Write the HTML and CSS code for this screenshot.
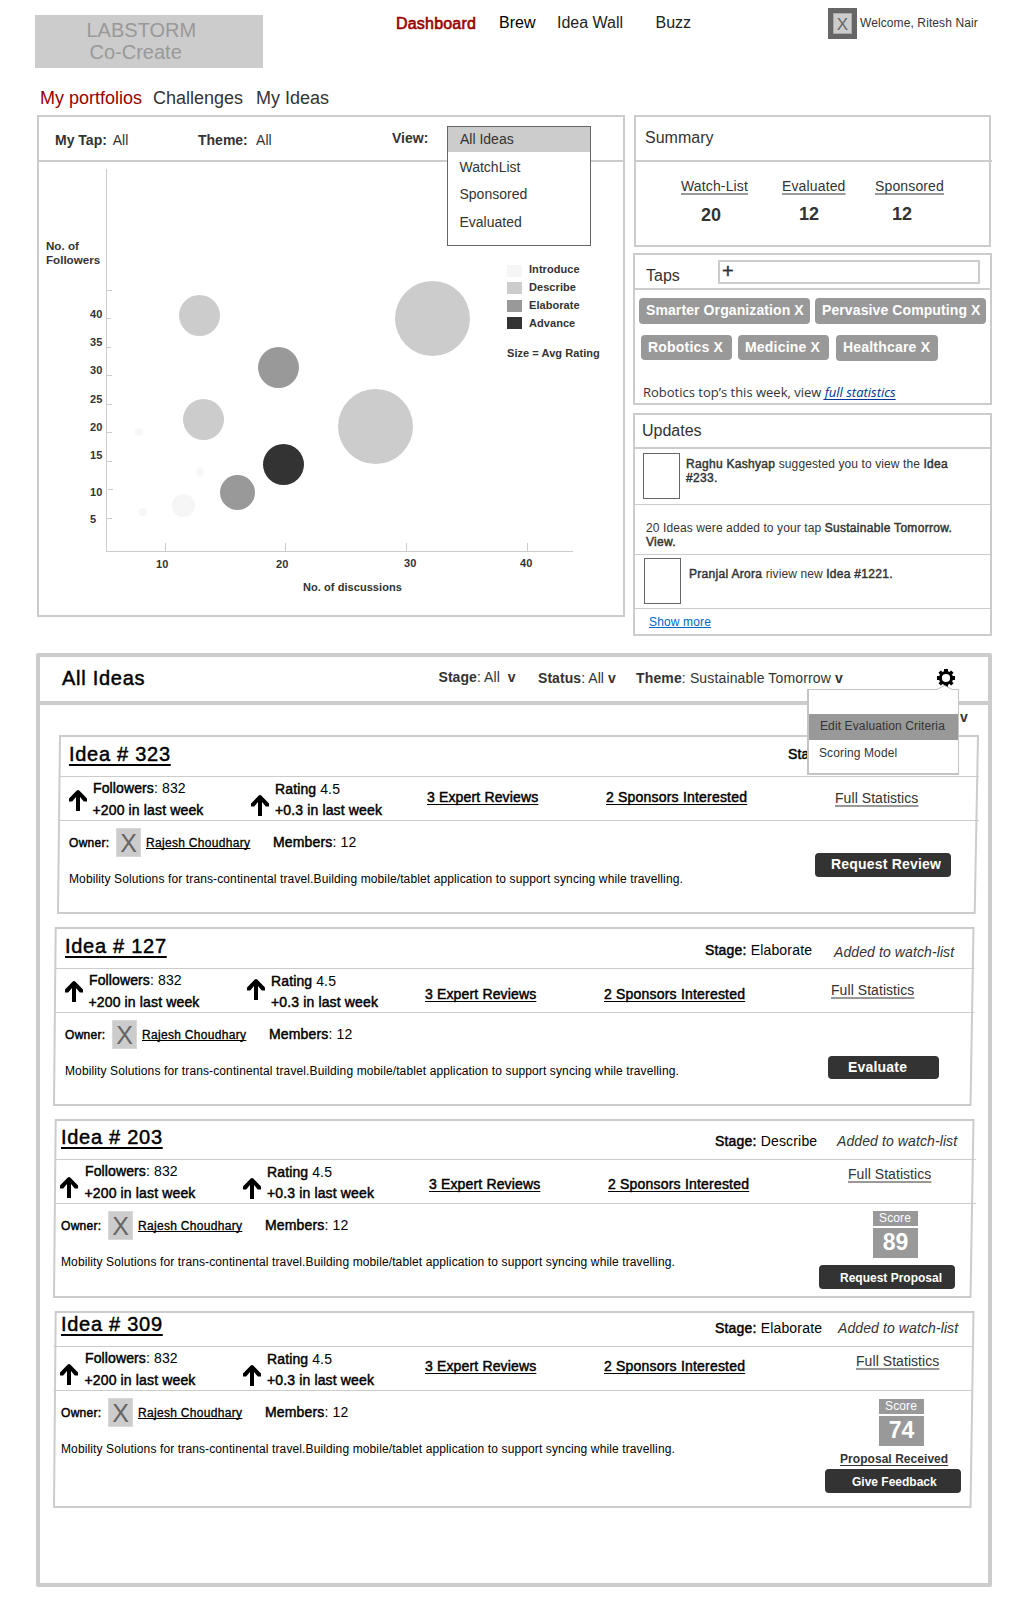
FILE: index.html
```html
<!DOCTYPE html>
<html lang="en">
<head>
<meta charset="utf-8">
<title>Labstorm Co-Create</title>
<link rel="stylesheet" href="styles.css">
</head>
<body>
<svg width="0" height="0" class="defs">
  <symbol id="arrow" viewBox="0 0 18 21"><path d="M7 21V7L3.200 11.500H0V8.600L7.500.8Q9-.6 10.500.8L18 8.600V11.500H14.800L11 7V21z"/></symbol>
</svg>

<header class="top">
  <div class="logo">LABSTORM<br><span>Co-Create</span></div>
  <nav class="nav">
    <a class="active">Dashboard</a><a class="dark">Brew</a><a>Idea Wall</a><a>Buzz</a>
  </nav>
  <div class="user"><span class="user-pic"><span>X</span></span><span class="user-name">Welcome, Ritesh Nair</span></div>
</header>

<nav class="subnav"><a class="active">My portfolios</a><a>Challenges</a><a>My Ideas</a></nav>

<main class="overview">
  <section class="panel portfolio">
    <div class="filters">
      <span><b>My Tap:</b> <span class="value">All</span></span>
      <span><b>Theme:</b>&nbsp; <span class="value narrow">All</span></span>
      <div class="view"><b>View:</b>
        <ul class="dropdown"><li class="on">All Ideas</li><li>WatchList</li><li>Sponsored</li><li>Evaluated</li></ul>
      </div>
    </div>
    <svg class="chart" width="584" height="453" viewBox="39 162 584 453">
      <g fill="#ccc" shape-rendering="crispEdges">
        <path d="M106 169h1v383h-1zM106 551h467v1H106z"/>
        <path d="M107 290h5v1h-5zM107 318h4v1h-4zM107 347h4v1h-4zM107 375h5v1h-5zM107 404h5v1h-5zM107 432h5v1h-5zM107 461h5v1h-5zM108 489h5v1h-5zM107 518h5v1h-5z"/>
        <path d="M165 543h1v8h-1zM285 543h1v8h-1zM406 543h1v8h-1zM527 543h1v8h-1z"/>
      </g>
      <g fill="#ccc"><circle cx="199.500" cy="315.500" r="20.500"/><circle cx="203.500" cy="419.500" r="20.500"/><circle cx="432.500" cy="318.500" r="37.500"/><circle cx="375.500" cy="426.500" r="37.500"/></g>
      <g fill="#999"><circle cx="278.500" cy="367.500" r="20.500"/><circle cx="237.500" cy="492.500" r="17.500"/></g>
      <circle cx="283.500" cy="464.500" r="20.500" fill="#333"/>
      <g fill="#f6f6f6"><circle cx="139" cy="432" r="4"/><circle cx="200" cy="472" r="4"/><circle cx="143" cy="512" r="4"/><circle cx="183.500" cy="505.500" r="11.500"/></g>
      <g class="axis-title"><text x="46" y="250">No. of</text><text x="46" y="264">Followers</text></g>
      <g class="labels">
        <text x="90" y="318">40</text><text x="90" y="346">35</text><text x="90" y="374">30</text><text x="90" y="403">25</text><text x="90" y="431">20</text><text x="90" y="459">15</text><text x="90" y="496">10</text><text x="90" y="523">5</text>
        <text x="156" y="568">10</text><text x="276" y="568">20</text><text x="404" y="567">30</text><text x="520" y="567">40</text>
        <text x="303" y="591">No. of discussions</text>
        <text x="529" y="273">Introduce</text><text x="529" y="291">Describe</text><text x="529" y="309">Elaborate</text><text x="529" y="327">Advance</text>
        <text x="507" y="357">Size = Avg Rating</text>
      </g>
      <rect x="507" y="265" width="15" height="12" fill="#f6f6f6"/><rect x="507" y="282" width="15" height="12" fill="#ccc"/><rect x="507" y="300" width="15" height="12" fill="#999"/><rect x="507" y="317" width="15" height="12" fill="#333"/>
    </svg>
  </section>

  <div class="side">
    <section class="panel summary">
      <h2>Summary</h2>
      <div class="counts">
        <div><a>Watch-List</a><b>20</b></div>
        <div><a>Evaluated</a><b>12</b></div>
        <div><a>Sponsored</a><b>12</b></div>
      </div>
    </section>
    <section class="panel taps">
      <div class="taps-head"><h2>Taps</h2><div class="tap-input">+</div></div>
      <div class="tags"><span class="w171">Smarter Organization X</span><span class="w171">Pervasive Computing X</span></div>
      <div class="tags second"><span>Robotics X</span><span>Medicine X</span><span class="w102">Healthcare X</span></div>
      <p class="tip">Robotics top’s this week, view <a>full statistics</a></p>
    </section>
    <section class="panel updates">
      <h2>Updates</h2>
      <div class="update u1"><i></i><p><b>Raghu Kashyap</b> suggested you to view the <b>Idea<br>#233.</b></p></div>
      <div class="update u2"><p>20 Ideas were added to your tap <b>Sustainable Tomorrow.<br>View.</b></p></div>
      <div class="update u3"><i></i><p><b>Pranjal Arora</b> riview new <b>Idea #1221.</b></p></div>
      <a class="more">Show more</a>
    </section>
  </div>
</main>

<section class="ideas">
  <div class="ideas-head">
    <h1>All Ideas</h1>
    <span class="f1"><b>Stage</b>: All&nbsp; <b>v</b></span>
    <span><b>Status</b>: All <b>v</b></span>
    <span class="f3"><b>Theme</b>: Sustainable Tomorrow <b>v</b></span>
    <svg class="gear" width="20" height="20" viewBox="-10 -10 20 20">
      <circle r="5.600" fill="none" stroke="#000" stroke-width="3"/>
      <path d="M-2-9h4v3h-4zM-2 6h4v3h-4zM-9-2h3v4h-3zM6-2h3v4H6z"/><path transform="rotate(45)" d="M-1.700-9h3.400v3h-3.400zM-1.700 6h3.400v3h-3.400zM-9-1.700h3v3.400h-3zM6-1.700h3v3.400H6z"/>
    </svg>
  </div>
  <div class="sort"><b>v</b></div>

  <div class="popover">
    <svg class="notch" width="18" height="5" viewBox="0 0 18 5"><path d="M0 5 8.500.5 17 5" fill="#fff" stroke="#bbb"/></svg>
    <a class="on">Edit Evaluation Criteria</a>
    <a>Scoring Model</a>
  </div>

  <article class="idea idea-323">
    <svg class="frame" width="930" height="179"><path d="M8 1H926L922.700 178H6z"/><path class="rule" d="M8 41.500H927M8 85.500H927"/></svg>
    <div class="idea-body">
      <div class="head"><h3>Idea # 323</h3><span class="stage"><b>Sta</b></span></div>
      <div class="stats">
        <svg class="arrow a1"><use href="#arrow"/></svg><p><b>Followers</b>: 832<br><b class="l2">+200 in last week</b></p>
        <svg class="arrow a2"><use href="#arrow"/></svg><p class="rating"><b>Rating</b> 4.5<br><b class="l2">+0.3 in last week</b></p>
        <a class="reviews">3 Expert Reviews</a><a class="sponsors">2 Sponsors Interested</a><a class="full">Full Statistics</a>
      </div>
      <div class="detail">
        <div>
          <div class="owner"><b>Owner:</b><span class="pic">X</span><a>Rajesh Choudhary</a><span class="members"><b>Members</b>: 12</span></div>
          <p class="desc">Mobility Solutions for trans-continental travel.Building mobile/tablet application to support syncing while travelling.</p>
        </div>
        <div class="act"><a class="btn large">Request Review</a></div>
      </div>
    </div>
  </article>

  <article class="idea idea-127">
    <svg class="frame" width="930" height="179"><path d="M3.700 1H921.500L918.500 178H2z"/><path class="rule" d="M4 41.500H922.500M4 85.500H922.500"/></svg>
    <div class="idea-body">
      <div class="head"><h3>Idea # 127</h3><span class="stage"><b>Stage:</b> Elaborate</span><i>Added to watch-list</i></div>
      <div class="stats">
        <svg class="arrow a1"><use href="#arrow"/></svg><p><b>Followers</b>: 832<br><b class="l2">+200 in last week</b></p>
        <svg class="arrow a2"><use href="#arrow"/></svg><p class="rating"><b>Rating</b> 4.5<br><b class="l2">+0.3 in last week</b></p>
        <a class="reviews">3 Expert Reviews</a><a class="sponsors">2 Sponsors Interested</a><a class="full">Full Statistics</a>
      </div>
      <div class="detail">
        <div>
          <div class="owner"><b>Owner:</b><span class="pic">X</span><a>Rajesh Choudhary</a><span class="members"><b>Members</b>: 12</span></div>
          <p class="desc">Mobility Solutions for trans-continental travel.Building mobile/tablet application to support syncing while travelling.</p>
        </div>
        <div class="act"><a class="btn large">Evaluate</a></div>
      </div>
    </div>
  </article>

  <article class="idea idea-203">
    <svg class="frame" width="930" height="179"><path d="M3.700 1H921.500L918.500 178H2z"/><path class="rule" d="M4 40.500H924M4 84.500H924"/></svg>
    <div class="idea-body">
      <div class="head"><h3>Idea # 203</h3><span class="stage"><b>Stage:</b> Describe</span><i>Added to watch-list</i></div>
      <div class="stats">
        <svg class="arrow a1"><use href="#arrow"/></svg><p><b>Followers</b>: 832<br><b class="l2">+200 in last week</b></p>
        <svg class="arrow a2"><use href="#arrow"/></svg><p class="rating"><b>Rating</b> 4.5<br><b class="l2">+0.3 in last week</b></p>
        <a class="reviews">3 Expert Reviews</a><a class="sponsors">2 Sponsors Interested</a><a class="full">Full Statistics</a>
      </div>
      <div class="detail">
        <div>
          <div class="owner"><b>Owner:</b><span class="pic">X</span><a>Rajesh Choudhary</a><span class="members"><b>Members</b>: 12</span></div>
          <p class="desc">Mobility Solutions for trans-continental travel.Building mobile/tablet application to support syncing while travelling.</p>
        </div>
        <div class="act"><div class="score"><span>Score</span><b>89</b></div><a class="btn">Request Proposal</a></div>
      </div>
    </div>
  </article>

  <article class="idea idea-309">
    <svg class="frame" width="930" height="197"><path d="M3.700 1H921.500L918.500 196H2z"/><path class="rule" d="M1.500 35.500H920M1.500 79.500H920"/></svg>
    <div class="idea-body">
      <div class="head"><h3>Idea # 309</h3><span class="stage"><b>Stage:</b> Elaborate</span><i>Added to watch-list</i></div>
      <div class="stats">
        <svg class="arrow a1"><use href="#arrow"/></svg><p><b>Followers</b>: 832<br><b class="l2">+200 in last week</b></p>
        <svg class="arrow a2"><use href="#arrow"/></svg><p class="rating"><b>Rating</b> 4.5<br><b class="l2">+0.3 in last week</b></p>
        <a class="reviews">3 Expert Reviews</a><a class="sponsors">2 Sponsors Interested</a><a class="full">Full Statistics</a>
      </div>
      <div class="detail">
        <div>
          <div class="owner"><b>Owner:</b><span class="pic">X</span><a>Rajesh Choudhary</a><span class="members"><b>Members</b>: 12</span></div>
          <p class="desc">Mobility Solutions for trans-continental travel.Building mobile/tablet application to support syncing while travelling.</p>
        </div>
        <div class="act"><div class="score"><span>Score</span><b>74</b></div><a class="received">Proposal Received</a><a class="btn">Give Feedback</a></div>
      </div>
    </div>
  </article>
</section>
</body>
</html>
```

FILE: styles.css
```css
* { box-sizing: border-box; }
body {
  margin: 0;
  width: 1024px;
  height: 1600px;
  background: #fff;
  color: #333;
  font: 14px/16px "Liberation Sans", Arial, sans-serif;
}
h1, h2, h3, p, ul { margin: 0; padding: 0; font-weight: normal; }
a, span, b, h1, h3 { white-space: nowrap; }
.defs { display: block; }

/* header */
.top { display: grid; grid-template-columns: 228px 301px 1fr; height: 88px; padding-left: 35px; column-gap: 132px; }
.logo { height: 53px; margin-top: 15px; padding: 4px 0 0 51.500px; background: #ccc; color: #999; font-size: 20px; line-height: 22px; }
.logo span { padding-left: 3px; }
.nav { display: grid; grid-template-columns: 103px 58px 98.500px auto; padding: 14px 0 0 1px; font-size: 16px; line-height: 17px; color: #222; }
.nav .active { color: #900; margin-top: 1px; -webkit-text-stroke: .6px #900; letter-spacing: .2px; }
.nav .dark { color: #000; }
.user { display: flex; padding-top: 8px; }
.user-pic { width: 29px; height: 31px; padding: 5px; background: #666; }
.user-pic span { display: block; width: 19px; height: 21px; border: 1px solid #aaa; background: #ccc; color: #666; font-size: 17px; line-height: 22px; text-align: center; }
.user-name { margin: 8px 0 0 3px; font-size: 12px; line-height: 14px; letter-spacing: .1px; }

.subnav { display: grid; grid-template-columns: 113px 103px auto; height: 27px; padding-left: 40px; font-size: 18px; line-height: 20px; }
.subnav .active { color: #900; }

/* overview */
.overview { display: grid; grid-template-columns: 588px 359px; column-gap: 8px; height: 522px; padding-left: 37px; align-items: start; }
.panel { border: 2px solid #ccc; }
.portfolio { height: 502px; }
.filters { display: grid; grid-template-columns: 143px 194px auto; height: 45px; padding: 15px 0 0 16px; border-bottom: 2px solid #ccc; }
.value { margin-left: 2px; }
.value.narrow { margin-left: .5px; }
.view { position: relative; margin-top: -2px; }
.dropdown { position: absolute; left: 55px; top: -4px; width: 144px; height: 120px; border: 1px solid #666; background: #fff; list-style: none; }
.dropdown li { height: 27.300px; padding: 7px 0 0 11.500px; }
.dropdown .on { height: 25px; padding: 4px 0 0 12px; background: #ccc; }
.chart { display: block; }
.chart text { font-weight: bold; fill: #333; }
.labels { font-size: 11px; letter-spacing: .06px; }
.axis-title { font-size: 11.600px; }

.side { display: flex; flex-direction: column; }
.summary { width: 357px; height: 132px; margin-left: 1px; }
h2 { font-size: 16px; line-height: 17px; }
.summary h2 { height: 45px; width: 356px; padding: 12px 0 0 9px; border-bottom: 2px solid #ccc; }
.counts { display: grid; grid-template-columns: 101px 93px auto; padding: 16px 0 0 45px; }
.counts div { display: flex; flex-direction: column; align-items: flex-start; }
.counts a { text-decoration: underline; text-decoration-color: #999; text-decoration-thickness: 2px; text-underline-offset: 2px; text-decoration-skip-ink: none; letter-spacing: .14px; }
.counts b { margin: 10px 0 0 17px; font-size: 18px; line-height: 20px; }
.counts div:first-child b { margin: 11px 0 0 20px; }

.taps { height: 152px; margin-top: 6px; }
.taps-head { display: flex; height: 35px; padding-left: 11px; border-bottom: 2px solid #ccc; }
.taps-head h2 { width: 72px; padding-top: 12px; }
.tap-input { width: 262px; height: 24px; margin-top: 5px; padding-left: 2px; border: 2px solid #ccc; font-size: 20px; line-height: 19px; -webkit-text-stroke: .4px #333; }
.tags { display: flex; gap: 5px; padding: 8px 0 0 4px; }
.tags span { width: 91px; height: 25px; padding: 4px 0 0 7px; border-radius: 4px; background: #999; color: #fff; font-weight: bold; letter-spacing: .2px; }
.tags .w171 { width: 171px; height: 26px; letter-spacing: .1px; }
.tags.second { gap: 6px; padding: 11px 0 0 6px; }
.tags .w102 { width: 102px; height: 26px; margin-left: 1px; }
.tip { margin: 22px 0 0 8px; font: 13px/18px "Open Sans", sans-serif; letter-spacing: 0; }
.tip a { color: #039; font-style: italic; text-decoration: underline; text-underline-offset: 2px; text-decoration-skip-ink: none; }

.updates { height: 223px; margin-top: 8px; font-size: 12px; line-height: 14px; }
.updates h2 { height: 34px; padding: 7px 0 0 7px; border-bottom: 2px solid #ccc; }
.update { display: flex; border-bottom: 1px solid #ccc; letter-spacing: .1px; }
.update b { font-weight: normal; letter-spacing: .3px; -webkit-text-stroke: .45px #333; }
.update i { width: 37px; height: 46px; border: 1px solid #666; }
.u1 { height: 56px; padding: 4px 0 0 8px; }
.u1 p { margin: 4px 0 0 6px; }
.u2 { height: 50px; padding: 16px 0 0 11px; }
.u3 { height: 54px; padding: 3px 0 0 9px; }
.u3 p { margin: 9px 0 0 8px; }
.more { display: inline-block; margin: 6px 0 0 14px; color: #06c; text-decoration: underline; letter-spacing: .15px; text-underline-offset: 1px; text-decoration-skip-ink: none; }

/* idea list */
.ideas { position: relative; width: 956px; height: 934px; margin: 16px 0 0 36px; border: 4px solid #ccc; border-radius: 2px; }
.ideas-head { display: grid; grid-template-columns: 377.500px 99.500px 98px 1fr 20px; height: 48px; padding: 13px 32px 0 22px; border-bottom: 4px solid #ccc; }
h1, h3 { font-size: 20px; line-height: 22px; color: #000; letter-spacing: .72px; -webkit-text-stroke: .45px #000; }
h1 { margin-top: -3px; }
.ideas-head span { margin-left: -1px; letter-spacing: .06px; }
.ideas-head .f1 { margin-top: -1px; }
.ideas-head .f3 { letter-spacing: .14px; }
.gear { margin-top: -2px; }
.sort { height: 30px; padding: 4px 0 0 920px; }

.popover { position: absolute; left: 767px; top: 32px; width: 152px; height: 86px; padding-top: 24px; border: 2px solid #c4c4c4; border-width: 1px 1px 2px 2px; background: #fff; }
.notch { position: absolute; left: 127px; top: -5px; }
.popover a { display: block; height: 26px; padding: 6px 0 0 10px; font-size: 12px; line-height: 14px; letter-spacing: .12px; }
.popover .on { padding-left: 11px; padding-top: 5px; background: #999; }

.idea { display: grid; width: 930px; margin: 0 0 13px 12px; color: #000; }
.frame, .idea-body { grid-area: 1 / 1; }
.frame { display: block; fill: none; stroke: #ccc; stroke-width: 2; }
.frame .rule { stroke-width: 1; }

.idea-323 { --pad: 17px; --head-h: 42px; --stage-x: 736px; --stage-w: 128px; --stage-y: 11px; --watch-y: 17px; --reviews-x: 375px; --reviews-y: 12px; --full-x: 783px; --full-y: 13px; --a1: 13px; --a2: 18px; --act: 763px; }
.idea-127 { --pad: 13px; --head-h: 42px; --stage-x: 653px; --stage-w: 129px; --stage-y: 15px; --watch-y: 17px; --reviews-x: 373px; --reviews-y: 17px; --full-x: 779px; --full-y: 13px; --a1: 12px; --a2: 10px; --act: 776px; }
.idea-203 { --pad: 9px; --head-h: 41px; --stage-x: 663px; --stage-w: 122px; --stage-y: 14px; --watch-y: 14px; --reviews-x: 377px; --reviews-y: 16px; --full-x: 796px; --full-y: 6px; --a1: 17px; --a2: 18px; --act: 767px; }
.idea-309 { --pad: 9px; --head-h: 36px; --stage-x: 663px; --stage-w: 123px; --stage-y: 9px; --watch-y: 9px; --reviews-x: 373px; --reviews-y: 11px; --full-x: 804px; --full-y: 6px; --a1: 17px; --a2: 18px; --act: 773px; }

.idea b { font-weight: normal; -webkit-text-stroke: .45px currentColor; }
.head { display: grid; grid-template-columns: var(--stage-x) var(--stage-w) 1fr; height: var(--head-h); align-items: start; }
.head h3 { margin-top: calc(var(--head-h) - 34px); padding-left: var(--pad); text-decoration: underline; text-decoration-thickness: 1.500px; text-underline-offset: 3px; text-decoration-skip-ink: none; }
.stage { margin-top: var(--stage-y); letter-spacing: .18px; }
.head i { margin-top: var(--watch-y); color: #333; letter-spacing: .1px; }

.stats {
  display: grid;
  grid-template-columns:
    calc(var(--pad) + 24px) 158.500px 24px
    calc(var(--reviews-x) - var(--pad) - 206.500px) 179px
    calc(var(--full-x) - var(--reviews-x) - 179px) 1fr;
  height: 44px;
  align-items: start;
}
.arrow { width: 18px; height: 21px; }
.a1 { margin: var(--a1) 0 0 var(--pad); }
.idea-203 .a1, .idea-309 .a1 { margin-left: calc(var(--pad) - 1px); }
.a2 { margin-top: var(--a2); margin-left: -.500px; }
.stats p { padding-top: 3px; line-height: 16px; letter-spacing: .12px; }
.stats .l2 { display: inline-block; margin-top: 6px; margin-left: -.500px; letter-spacing: .14px; }
.stats .rating { padding-top: 4px; }
.stats .rating .l2 { margin-top: 5px; margin-left: 0; }
.stats .rating { margin-left: -.5px; }
.reviews, .sponsors { margin-top: var(--reviews-y); -webkit-text-stroke: .45px #000; text-decoration: underline; text-decoration-thickness: 1px; text-underline-offset: 2px; text-decoration-skip-ink: none; letter-spacing: .15px; }
.sponsors { letter-spacing: .2px; }
.full { margin-top: var(--full-y); color: #333; letter-spacing: .06px; text-decoration: underline; text-decoration-color: #999; text-decoration-thickness: 2px; text-underline-offset: 2px; text-decoration-skip-ink: none; }

.detail { display: grid; grid-template-columns: var(--act) 1fr; font-size: 12px; line-height: 14px; }
.owner { display: grid; grid-template-columns: 47px 30px 127px auto; height: 36px; padding: 7px 0 0 var(--pad); }
.owner b { letter-spacing: .3px; }
.owner > b, .owner > a { margin-top: 8px; }
.owner > a { -webkit-text-stroke: .3px #000; letter-spacing: .31px; text-decoration: underline; text-decoration-thickness: 1px; text-underline-offset: 1px; text-decoration-skip-ink: none; }
.pic { width: 25px; height: 29px; border: 1px solid #d8d8d8; background: #ccc; color: #666; font-size: 25px; line-height: 28px; text-align: center; }
.members { margin-top: 6px; font-size: 14px; line-height: 16px; letter-spacing: .2px; }
.owner .members b { letter-spacing: .15px; }
.desc { padding: 15px 0 0 var(--pad); letter-spacing: .12px; white-space: nowrap; }

.btn { display: block; width: 136px; height: 24px; padding: 6px 0 0 21px; border-radius: 4px; background: #333; color: #fff; font-weight: bold; }
.btn.large { padding: 3px 0 0 16px; font-size: 14px; line-height: 16px; letter-spacing: .2px; }
.idea-323 .act { padding-top: 32px; }
.idea-127 .act { padding-top: 43px; }
.idea-127 .btn { width: 111px; height: 23px; padding-left: 20px; }
.idea-203 .act { padding-top: 7px; }
.idea-309 .act { padding-top: 8px; }
.score { display: grid; gap: 2px; width: 45px; margin: 0 0 7px 54px; color: #fff; text-align: center; }
.score span { height: 15px; padding-right: 1px; background: #999; letter-spacing: .1px; }
.idea .score b { height: 30px; background: #999; font-size: 23px; line-height: 28px; font-weight: bold; -webkit-text-stroke: 0; }
.received { display: block; margin: -1px 0 3px 15px; color: #333; font-weight: bold; letter-spacing: .05px; text-decoration: underline; text-decoration-thickness: 1px; text-underline-offset: 2px; text-decoration-skip-ink: none; }
.idea-309 .btn { padding-left: 27px; }
```
